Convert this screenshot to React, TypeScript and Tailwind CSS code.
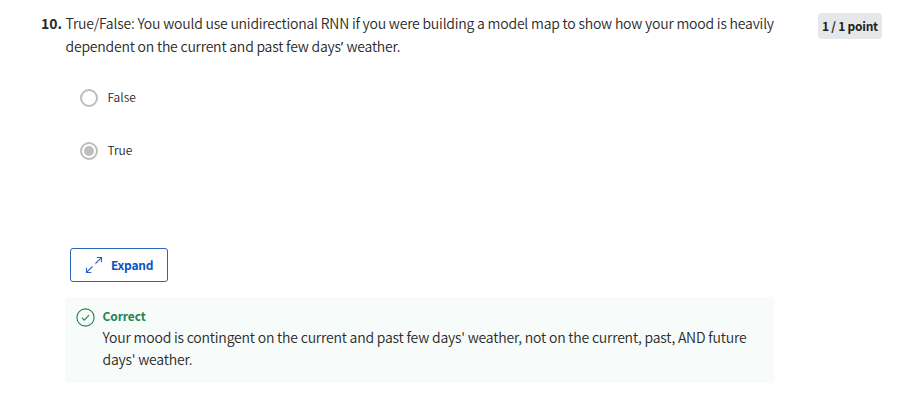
import React from "react";

function Radio({ label, checked }: { label: string; checked?: boolean }) {
  return (
    <label className="flex h-[20px] items-center">
      <span className="flex size-[18px] items-center justify-center rounded-full border-2 border-[#bdbdbd] bg-white">
        {checked && <span className="size-[10px] rounded-full bg-[#bdbdbd]" />}
      </span>
      <span className="-mt-[2px] ml-[9.5px] text-[12px] font-[350] leading-[20px] text-[#1f1f1f]">{label}</span>
    </label>
  );
}

function ExpandIcon() {
  return (
    <svg width="18" height="18" viewBox="0 0 18 18" fill="none" stroke="#2a62bd" strokeWidth="1.1">
      <path d="M10.5 7.5 16.3 1.8M11.7 1.5h4.8v4.8M7.5 10.5l-5.8 5.7M1.5 11.7v4.8h4.8" />
    </svg>
  );
}

function CheckIcon() {
  return (
    <svg width="19" height="19" viewBox="0 0 19 19" fill="none" stroke="#1f8354" strokeWidth="1.1">
      <circle cx="9.5" cy="9.5" r="8.6" />
      <path d="m5.8 9.7 2.5 2.5 4.7-5" />
    </svg>
  );
}

export default function App() {
  return (
    <main className="h-[406px] w-[923px] overflow-hidden bg-white pl-[41px] pt-[13px] font-['Noto_Sans_CJK_SC',sans-serif] text-[#2a2a2a]">
      <div className="flex h-[44px] items-start">
        <div className="-mt-[1px] w-[24.5px] text-[14px] font-bold leading-[22px]">10.</div>
        <div className="-mt-[1px] w-[752.5px] whitespace-nowrap text-[14px] font-[350] leading-[22px] tracking-[-0.209px]">
          <p>True/False: You would use unidirectional RNN if you were building a model map to show how your mood is heavily</p>
          <p className="mt-[1px]">dependent on the current and past few days<span className="mr-[0.5px] font-['Noto_Sans'] font-normal leading-[0]">’</span> weather.</p>
        </div>
        <div className="flex h-[26px] w-[64px] items-center justify-center whitespace-nowrap rounded-[4px] bg-[#e5e7e8] pb-[1px] text-[12px] font-bold tracking-[-0.25px] text-[#1f1f1f]">
          1 / 1 point
        </div>
      </div>
      <div className="ml-[39px] mt-[31px] flex flex-col gap-[33px]">
        <Radio label="False" />
        <Radio label="True" checked />
      </div>
      <button className="ml-[29px] mt-[87px] flex h-[34px] w-[98px] items-center rounded-[3px] border border-[#2a62bd] pl-[14px] text-[12px] font-bold tracking-[-0.25px] text-[#0c55c0]">
        <ExpandIcon />
        <span className="-mt-[1px] ml-[8px]">Expand</span>
      </button>
      <section className="ml-[24px] mt-[15px] flex h-[86px] w-[709px] bg-[#f7fbf9] pl-[11px] pt-[11px]">
        <CheckIcon />
        <div className="-mt-[2px] ml-[7.5px] whitespace-nowrap">
          <h2 className="text-[12px] font-bold leading-[20px] tracking-[-0.1px] text-[#1f8354]">Correct</h2>
          <div className="text-[14px] font-[350] leading-[22px] tracking-[-0.198px]">
            <p>Your mood is contingent on the current and past few days' weather, not on the current, past, AND future</p>
            <p>days' weather.</p>
          </div>
        </div>
      </section>
    </main>
  );
}
